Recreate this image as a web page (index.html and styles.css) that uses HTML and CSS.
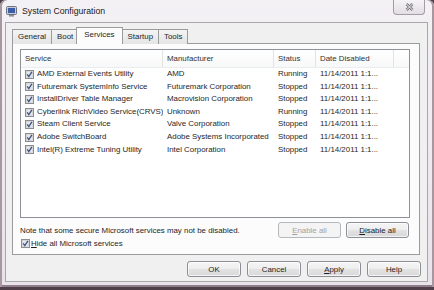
FILE: index.html
```html
<!DOCTYPE html>
<html lang="en">
<head>
    <meta charset="UTF-8">
    <title>System Configuration</title>
    <link rel="stylesheet" href="styles.css">
</head>
<body>

<div class="window">
    <div class="titlebar">
        <svg class="app-icon" width="11" height="11" viewBox="0 0 11 11">
            <rect x="0.5" y="0.5" width="10" height="8" rx="1" fill="#c9ccd8" stroke="#6d7283"/>
            <rect x="2" y="2" width="7" height="5" fill="#3d5ca6"/>
            <rect x="3" y="9" width="5" height="1.6" fill="#8c90a0"/>
        </svg>
        <span class="title">System Configuration</span>
        <div class="close">
            <svg width="9" height="8" viewBox="0 0 9 8">
                <path d="M1.5 1 L7.5 7 M7.5 1 L1.5 7" stroke="#77737c" stroke-width="2.6"/>
                <path d="M1.5 1 L7.5 7 M7.5 1 L1.5 7" stroke="#f7f7f7" stroke-width="1"/>
            </svg>
        </div>
    </div>

    <div class="client">
        <div class="tabs">
            <div class="tab">General</div>
            <div class="tab">Boot</div>
            <div class="tab active">Services</div>
            <div class="tab">Startup</div>
            <div class="tab">Tools</div>
        </div>

        <div class="panel">
            <div class="list">
                <div class="row head">
                    <div class="cell">Service</div>
                    <div class="cell">Manufacturer</div>
                    <div class="cell">Status</div>
                    <div class="cell">Date Disabled</div>
                    <div class="cell"></div>
                </div>
                <!-- rows -->
                <div class="row">
                    <div class="cell name"><svg class="cb" viewBox="0 0 9 9"><use href="#check"/></svg>AMD External Events Utility</div>
                    <div class="cell">AMD</div>
                    <div class="cell">Running</div>
                    <div class="cell">11/14/2011 1:1...</div>
                </div>
                <div class="row">
                    <div class="cell name"><svg class="cb" viewBox="0 0 9 9"><use href="#check"/></svg>Futuremark SystemInfo Service</div>
                    <div class="cell">Futuremark Corporation</div>
                    <div class="cell">Stopped</div>
                    <div class="cell">11/14/2011 1:1...</div>
                </div>
                <div class="row">
                    <div class="cell name"><svg class="cb" viewBox="0 0 9 9"><use href="#check"/></svg>InstallDriver Table Manager</div>
                    <div class="cell">Macrovision Corporation</div>
                    <div class="cell">Stopped</div>
                    <div class="cell">11/14/2011 1:1...</div>
                </div>
                <div class="row">
                    <div class="cell name"><svg class="cb" viewBox="0 0 9 9"><use href="#check"/></svg>Cyberlink RichVideo Service(CRVS)</div>
                    <div class="cell">Unknown</div>
                    <div class="cell">Running</div>
                    <div class="cell">11/14/2011 1:1...</div>
                </div>
                <div class="row">
                    <div class="cell name"><svg class="cb" viewBox="0 0 9 9"><use href="#check"/></svg>Steam Client Service</div>
                    <div class="cell">Valve Corporation</div>
                    <div class="cell">Stopped</div>
                    <div class="cell">11/14/2011 1:1...</div>
                </div>
                <div class="row">
                    <div class="cell name"><svg class="cb" viewBox="0 0 9 9"><use href="#check"/></svg>Adobe SwitchBoard</div>
                    <div class="cell">Adobe Systems Incorporated</div>
                    <div class="cell">Stopped</div>
                    <div class="cell">11/14/2011 1:1...</div>
                </div>
                <div class="row">
                    <div class="cell name"><svg class="cb" viewBox="0 0 9 9"><use href="#check"/></svg>Intel(R) Extreme Tuning Utility</div>
                    <div class="cell">Intel Corporation</div>
                    <div class="cell">Stopped</div>
                    <div class="cell">11/14/2011 1:1...</div>
                </div>
            </div>

            <div class="note-row">
                <span>Note that some secure Microsoft services may not be disabled.</span>
                <div class="note-buttons">
                    <button class="btn wide" disabled><u>E</u>nable all</button>
                    <button class="btn wide"><u>D</u>isable all</button>
                </div>
            </div>

            <div class="hide-row">
                <svg class="cb" viewBox="0 0 9 9"><use href="#check"/></svg>
                <span><u>H</u>ide all Microsoft services</span>
            </div>
        </div>

        <div class="footer">
            <button class="btn">OK</button>
            <button class="btn">Cancel</button>
            <button class="btn"><u>A</u>pply</button>
            <button class="btn">Help</button>
        </div>
    </div>
</div>

<!-- shared checkbox glyph -->
<svg width="0" height="0" class="defs">
    <symbol id="check" viewBox="0 0 9 9">
        <rect x="0.5" y="0.5" width="8" height="8" fill="#f3f3f3" stroke="#8b8d92"/>
        <rect x="1.5" y="1.5" width="6" height="6" fill="#e4e5e8" stroke="#c9cbd0" stroke-width="0.6"/>
        <path d="M2.2 4.4 L3.8 6.6 L6.9 1.8" fill="none" stroke="#3f5283" stroke-width="1.3"/>
    </symbol>
</svg>

</body>
</html>
```

FILE: styles.css
```css
* {
    box-sizing: border-box;
}

html, body {
    margin: 0;
    padding: 0;
}

body {
    width: 434px;
    height: 290px;
    overflow: hidden;
    background: #4f3f4b;
    font-family: "Liberation Sans", Arial, sans-serif;
    font-size: 7.9px;
    color: #1f1f1f;
}

.defs {
    position: absolute;
}

.window {
    height: 287px;
    display: flex;
    flex-direction: column;
    padding: 0 6px 5px 5px;
    background: linear-gradient(#f4f1f5, #e8e3ea);
    border-radius: 6px 6px 0 0;
    box-shadow: inset 2px 0 0 #a8979f, inset -2px 0 0 #a8979f, inset 0 -2px 0 #8f7d8b;
}

/* title bar */
.titlebar {
    height: 22px;
    display: flex;
    align-items: center;
}

.app-icon {
    margin-left: 1px;
    margin-right: 5px;
}

.title {
    font-size: 8.7px;
    color: #1a1a1a;
}

.close {
    margin-left: auto;
    margin-right: 3px;
    align-self: flex-start;
    width: 32px;
    height: 15px;
    display: flex;
    align-items: center;
    justify-content: center;
    border: 1px solid #a19ca5;
    border-top: none;
    border-radius: 0 0 4px 4px;
    background: linear-gradient(#f5f3f6, #e2dee4);
}

/* dialog body */
.client {
    flex: 1;
    display: flex;
    flex-direction: column;
    padding: 4px 6px 0 6px;
    background: #f0f0f0;
    border: 1px solid #aaa6ac;
}

.tabs {
    height: 17px;
    margin-bottom: -1px;
    display: flex;
    align-items: flex-end;
    position: relative;
    z-index: 1;
}

.tab {
    height: 15px;
    padding: 0 5px;
    margin-right: -1px;
    line-height: 14px;
    border: 1px solid #9a9b9c;
    border-bottom: none;
    background: linear-gradient(#f4f4f4, #e4e4e4);
}

.tab.active {
    height: 17px;
    margin: 0 -1px 0 -2px;
    padding: 0 7px;
    line-height: 13px;
    background: #fcfcfc;
    position: relative;
    z-index: 2;
}

.panel {
    height: 212px;
    margin-right: 1px;
    padding: 5px 9px 0 7px;
    background: #fcfcfc;
    border: 1px solid #9a9b9c;
}

/* services list */
.list {
    height: 169px;
    background: #fff;
    border: 1px solid #8e9198;
}

.row {
    display: grid;
    grid-template-columns: 142px 111px 42px 78px 1fr;
    height: 12.6px;
    line-height: 12.6px;
}

.row.head {
    height: 18px;
    line-height: 17px;
    background: linear-gradient(#ffffff, #f7f8f9);
    border-bottom: 1px solid #ececec;
    color: #333;
}

.cell {
    padding-left: 4px;
    white-space: nowrap;
    overflow: hidden;
}

.head .cell {
    border-right: 1px solid #e3e3e3;
}

.head .cell:last-child {
    border-right: none;
}

.cell.name {
    display: flex;
    align-items: center;
    gap: 3px;
}

.cb {
    width: 9px;
    height: 9px;
    flex: none;
}

/* below the list */
.note-row {
    height: 16px;
    margin-top: 4px;
    display: flex;
    align-items: center;
    justify-content: space-between;
}

.note-buttons {
    display: flex;
    gap: 5px;
    margin-right: 1px;
}

.hide-row {
    height: 10px;
    margin-left: 1px;
    display: flex;
    align-items: center;
    gap: 1px;
}

.footer {
    margin-top: 6px;
    display: flex;
    justify-content: flex-end;
    gap: 6px;
}

.btn {
    width: 54px;
    height: 16px;
    padding: 0;
    font: inherit;
    color: #1f1f1f;
    border: 1px solid #8c8f95;
    border-radius: 3px;
    background: linear-gradient(#f5f5f5 0%, #eeeeee 48%, #e2e2e2 52%, #d8d8d8 100%);
    box-shadow: inset 0 0 0 1px rgba(255, 255, 255, 0.7);
}

.btn.wide {
    width: 63px;
}

.btn:disabled {
    color: #a2a2a2;
    border-color: #b5b9bd;
    background: #f4f4f4;
    box-shadow: none;
}
```
